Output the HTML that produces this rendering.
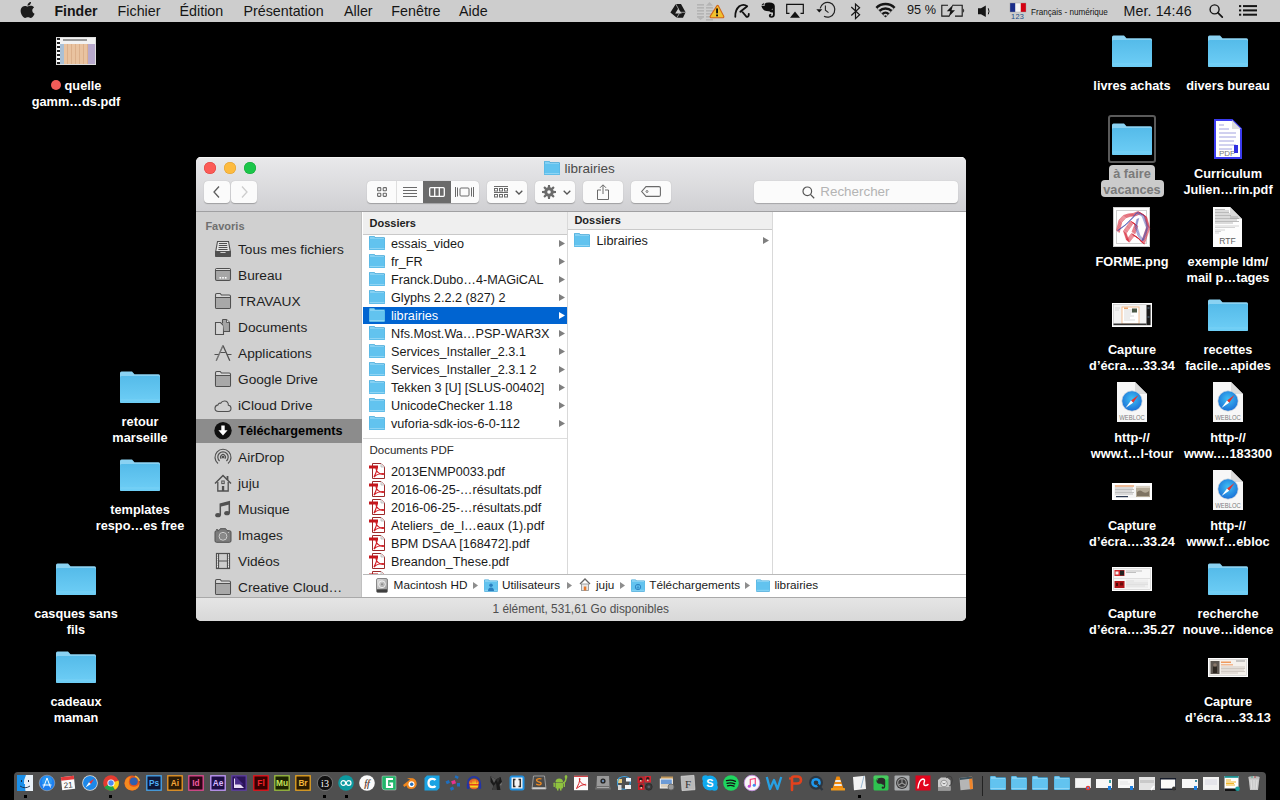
<!DOCTYPE html><html><head><meta charset="utf-8"><title>Finder</title><style>
*{box-sizing:border-box;margin:0;padding:0}
html,body{width:1280px;height:800px;overflow:hidden;background:#000}
body{position:relative;font-family:"Liberation Sans",sans-serif}
.a{position:absolute}
.t{position:absolute;white-space:nowrap;line-height:1}
svg{position:absolute;overflow:visible}
.dl{position:absolute;width:140px;text-align:center;color:#fff;font-weight:bold;font-size:12.75px;line-height:16px;text-shadow:0 1px 1.5px rgba(0,0,0,.9)}
</style></head><body>
<svg width="0" height="0" style="position:absolute;left:0;top:0">
<defs>
<linearGradient id="fg" x1="0" y1="0" x2="0" y2="1"><stop offset="0" stop-color="#55bbe9"/><stop offset="1" stop-color="#6ecef6"/></linearGradient>
<linearGradient id="tbg" x1="0" y1="0" x2="0" y2="1"><stop offset="0" stop-color="#ebe9eb"/><stop offset="1" stop-color="#d1cfd1"/></linearGradient>
<symbol id="fold" viewBox="0 0 40 32">
<path d="M1.5 0.5 H12 L14.5 3.2 H38.5 Q40 3.2 40 4.7 V30.5 Q40 32 38.5 32 H1.5 Q0 32 0 30.5 V2 Q0 0.5 1.5 0.5Z" fill="#8ad2f2"/>
<path d="M1.5 5 H38.5 Q40 5 40 6.5 V30.5 Q40 32 38.5 32 H1.5 Q0 32 0 30.5 V6.5 Q0 5 1.5 5Z" fill="url(#fg)"/>
<rect x="0.5" y="28.5" width="39" height="1" fill="#8ad8f8" opacity=".5"/>
</symbol>
<symbol id="sfold" viewBox="0 0 16 14">
<path d="M0 1 Q0 0 1 0 H5.2 L6.4 1.3 H15 Q16 1.3 16 2.3 V13 Q16 14 15 14 H1 Q0 14 0 13Z" fill="#3aa3d6"/>
<path d="M0.6 1.1 Q0.6 .6 1.1 .6 H5 L6.2 1.9 H14.9 Q15.4 1.9 15.4 2.4 V12.9 Q15.4 13.4 14.9 13.4 H1.1 Q.6 13.4 .6 12.9Z" fill="#86d1f3"/>
<rect x="0.6" y="3" width="14.8" height="10.4" fill="#62c3ef"/>
<rect x="0.6" y="12" width="14.8" height="0.8" fill="#9bdaf6"/>
</symbol>
<symbol id="pdfi" viewBox="0 0 16 16">
<path d="M3.5 0.5 H12 L15.5 4 V15.5 H3.5Z" fill="#fff" stroke="#9c2a2a" stroke-width="1"/>
<path d="M12 0.5 V4 H15.5" fill="#e8e8e8" stroke="#b9b9b9" stroke-width=".8"/>
<rect x="0" y="2.5" width="9" height="3" fill="#c4161c"/>
<path d="M5 14 C7 10 8 7 8 5.5 C8 4.5 7 4.5 7 5.5 C7 8 10 11.5 14 11.5 C15 11.5 15 10.5 14 10.5 C11 10.5 7 12 5 14Z" fill="none" stroke="#d21e25" stroke-width="1.2"/>
</symbol>
</defs></svg>
<div class="a" style="left:0;top:0;width:1280px;height:22px;background:#cdcdcd"></div>
<svg style="left:20.6px;top:1.9px" width="13.2" height="16" viewBox="2.7 0 18.6 24" preserveAspectRatio="none"><path fill="#1c1c1c" d="M12.152 6.896c-.948 0-2.415-1.078-3.960-1.040-2.040.027-3.910 1.183-4.961 3.014-2.117 3.675-.546 9.103 1.519 12.090 1.013 1.454 2.208 3.090 3.792 3.039 1.520-.065 2.090-.987 3.935-.987 1.831 0 2.350.987 3.960.948 1.637-.026 2.676-1.480 3.676-2.948 1.156-1.688 1.636-3.325 1.662-3.415-.039-.013-3.182-1.221-3.220-4.857-.026-3.040 2.480-4.494 2.597-4.559-1.429-2.090-3.623-2.324-4.390-2.376-2-.156-3.675 1.090-4.610 1.090zM15.530 3.830c.843-1.012 1.400-2.427 1.245-3.830-1.207.052-2.662.805-3.532 1.818-.780.896-1.454 2.338-1.273 3.714 1.338.104 2.715-.688 3.559-1.701"/></svg>
<div class="t" style="left:54.4px;top:3.86px;font-size:14.1px;color:#151515;font-weight:bold;">Finder</div>
<div class="t" style="left:117.6px;top:3.70px;font-size:14.3px;color:#151515;">Fichier</div>
<div class="t" style="left:179.5px;top:3.70px;font-size:14.3px;color:#151515;">Édition</div>
<div class="t" style="left:243.4px;top:3.70px;font-size:14.3px;color:#151515;">Présentation</div>
<div class="t" style="left:344px;top:3.70px;font-size:14.3px;color:#151515;">Aller</div>
<div class="t" style="left:391.3px;top:3.70px;font-size:14.3px;color:#151515;">Fenêtre</div>
<div class="t" style="left:459px;top:3.70px;font-size:14.3px;color:#151515;">Aide</div>
<svg style="left:0px;top:0px" width="1280" height="22" viewBox="0 0 1280 22"><path d="M675.8 4 H681 L685.6 12.3 L683 17.8 H676.8 L670.4 12.6Z M678.3 8.6 L675.2 13.6 H681.7Z" fill="#1a1a1a" fill-rule="evenodd"/><path d="M675.8 4 L678.6 9.2 M685.6 12.3 H679.600 M676.8 17.8 L679.400 13.400" stroke="#cfcfcf" stroke-width=".7"/><rect x="697" y="4" width="7" height="1.6" fill="#b4b4b4"/><rect x="706" y="7" width="7" height="1.6" fill="#b4b4b4"/><rect x="697" y="7" width="7" height="1.6" fill="#b4b4b4"/><rect x="706" y="10" width="7" height="1.6" fill="#b4b4b4"/><rect x="697" y="10" width="7" height="1.6" fill="#b4b4b4"/><rect x="706" y="13" width="7" height="1.6" fill="#b4b4b4"/><rect x="697" y="13" width="7" height="1.6" fill="#b4b4b4"/><rect x="706" y="16" width="7" height="1.6" fill="#b4b4b4"/><rect x="697" y="16" width="7" height="1.6" fill="#b4b4b4"/><rect x="706" y="19" width="7" height="1.6" fill="#b4b4b4"/><path d="M697 17.2 H704 L700.5 20Z" fill="#b4b4b4"/><path d="M706 5.8 H713 L709.5 2Z" fill="#b4b4b4"/><path d="M717 5.600 Q717.600 5 718.200 5.600 L723.800 16.300 Q724 17.800 722.600 17.800 H711.400 Q710 17.800 710.200 16.300Z" fill="#f0c22e" stroke="#d2661a" stroke-width="1.100"/><rect x="716.100" y="8.300" width="1.900" height="5.300" rx=".8" fill="#111"/><rect x="716.100" y="14.500" width="1.900" height="1.800" fill="#111"/><path d="M735.300 16.800 Q735 10 739.300 6.300 Q743.600 3.400 747.200 6.200 L740.300 11.800 M741.600 11 L746 16.200 Q747.600 17.600 748.600 15.800 L748.800 13.800" fill="none" stroke="#111" stroke-width="1.800" stroke-linecap="round" stroke-linejoin="round"/><path d="M764.600 3.800 Q766 2.200 769.500 2.400 Q774.500 2.600 774.800 6 V14.500 Q774.800 17.800 771.300 17.800 Q768.800 17.800 768.800 15.800 Q768.800 13.800 771 13.800 L771.500 15.200 L770.600 15.500 Q770.600 16.300 771.300 16.300 Q773 16.300 773 14.300 V12.500 Q770.500 12.800 769.300 11.300 Q766.600 11.400 764.500 10.600 Q762 9 761.400 6 L764.600 6Z M761.300 5.200 L763.700 2.800 V5.200Z" fill="#0d0d0d"/><path d="M771.400 9.500 L772.600 8.600 L772.900 9.700Z" fill="#cfcfcf"/><path d="M789.500 13.300 H786.700 V4.400 H803.300 V13.300 H800.500" fill="none" stroke="#111" stroke-width="1.200"/><path d="M795 11.500 L800 17.800 H790Z" fill="#111"/><path d="M820.200 8.300 A7.400 7.400 0 1 1 824 16.300" fill="none" stroke="#222" stroke-width="1.200"/><path d="M816.300 9.300 H822.300 L819.300 12.500Z" fill="#111"/><path d="M825.400 5.400 V10.300 L828.500 12.600" fill="none" stroke="#222" stroke-width="1.100"/><path d="M851.300 7 L859.600 14.800 L855.500 18.600 V4 L859.600 7.800 L851.300 15.500" fill="none" stroke="#151515" stroke-width="1.200" stroke-linejoin="miter"/><path d="M885.500 17.300 L875.500 6.900 A14.300 14.300 0 0 1 895.500 6.900Z" fill="#151515"/><path d="M885.500 17.300 L877.300 8.700 A11.700 11.700 0 0 1 893.700 8.700Z" fill="#cdcdcd"/><path d="M885.500 17.300 L878.600 10.100 A9.800 9.800 0 0 1 892.400 10.100Z" fill="#151515"/><path d="M885.500 17.300 L880.300 11.800 A7.400 7.400 0 0 1 890.700 11.800Z" fill="#cdcdcd"/><path d="M885.500 17.300 L881.600 13.200 A5.500 5.500 0 0 1 889.400 13.200Z" fill="#151515"/><path d="M885.500 17.300 L883.200 14.900 A3.200 3.200 0 0 1 887.800 14.900Z" fill="#cdcdcd"/><path d="M885.500 17.300 L884.200 15.900 A1.800 1.800 0 0 1 886.800 15.900Z" fill="#151515"/><path d="M948 5.200 H941.800 V16.100 H949.500 M952.500 5.200 H962.200 V16.100 H955" fill="none" stroke="#151515" stroke-width="1.100"/><path d="M963.200 8.500 Q965.200 10.600 963.200 12.700Z" fill="#151515"/><path d="M953.200 4.500 L946.800 11.200 H950.300 L948.600 17 L955 10.200 H951.500Z" fill="#151515"/><path d="M978 8.300 H981 L985.800 5.600 V17 L981 14.300 H978Z" fill="#151515"/><path d="M988.300 8.300 Q989.700 11.300 988.300 14.300" fill="none" stroke="#151515" stroke-width="1"/><rect x="1010" y="3" width="5.400" height="9" fill="#1b2e8a"/><rect x="1015.400" y="3" width="5.400" height="9" fill="#f4f4f4"/><rect x="1020.800" y="3" width="5.200" height="9" fill="#d40012"/><rect x="1010" y="3" width="16" height="9" fill="none" stroke="#9a9a9a" stroke-width=".4"/><circle cx="1214.600" cy="9.400" r="4.500" fill="none" stroke="#151515" stroke-width="1.400"/><path d="M1217.800 12.600 L1222.300 17.100" stroke="#151515" stroke-width="1.700" stroke-linecap="round"/><rect x="1239" y="5.1" width="2.200" height="2" fill="#151515"/><rect x="1243" y="5.1" width="14" height="2" fill="#151515"/><rect x="1239" y="9.4" width="2.200" height="2" fill="#151515"/><rect x="1243" y="9.4" width="14" height="2" fill="#151515"/><rect x="1239" y="13.7" width="2.200" height="2" fill="#151515"/><rect x="1243" y="13.7" width="14" height="2" fill="#151515"/></svg>
<div class="t" style="left:907px;top:4.45px;font-size:12.7px;color:#151515;">95 %</div>
<div class="t" style="left:1011px;top:12.54px;font-size:7.4px;color:#234d86;letter-spacing:.3px;">123</div>
<div class="t" style="left:1031.4px;top:6.90px;font-size:9.8px;color:#151515;transform:scaleX(.83);transform-origin:0 0;">Français - numérique</div>
<div class="t" style="left:1123.6px;top:3.58px;font-size:14.2px;color:#151515;letter-spacing:.1px;">Mer. 14:46</div>
<div class="a" style="left:56px;top:37px;width:40px;height:28px;background:#f2f2f2;border:1px solid #ddd"><div class="a" style="left:0;top:0;width:3px;height:26px;background:repeating-linear-gradient(#222 0 2px,#fff 2px 4px)"></div><div class="a" style="left:3px;top:6px;width:4px;height:20px;background:#a9c0d6"></div><div class="a" style="left:7px;top:6px;width:24px;height:20px;background:repeating-linear-gradient(90deg,#e9c3a0 0 3px,#dcb08b 3px 4px)"></div><div class="a" style="left:31px;top:6px;width:7px;height:20px;background:#b8a9cc"></div><div class="a" style="left:6px;top:1px;width:24px;height:2px;background:#999"></div></div>
<div class="a" style="left:51px;top:80px;width:10px;height:10px;border-radius:50%;background:#f25c58"></div>
<div class="dl" style="left:6px;top:78.3px"><span style="padding-left:14px">quelle</span><br>gamm…ds.pdf</div>
<svg style="left:120px;top:371px" width="40" height="32"><use href="#fold"/></svg>
<div class="dl" style="left:70px;top:413.9px;">retour<br>marseille</div>
<svg style="left:120px;top:459px" width="40" height="32"><use href="#fold"/></svg>
<div class="dl" style="left:70px;top:501.9px;">templates<br>respo…es free</div>
<svg style="left:56px;top:563px" width="40" height="32"><use href="#fold"/></svg>
<div class="dl" style="left:6px;top:606.0px;">casques sans<br>fils</div>
<svg style="left:56px;top:651px" width="40" height="32"><use href="#fold"/></svg>
<div class="dl" style="left:6px;top:694.0px;">cadeaux<br>maman</div>
<svg style="left:1112px;top:35px" width="40" height="32"><use href="#fold"/></svg>
<div class="dl" style="left:1062px;top:78.0px;">livres achats</div>
<div class="a" style="left:1108px;top:115px;width:48px;height:48px;border:2px solid #5a5a5a;border-radius:3px"></div>
<svg style="left:1112px;top:123px" width="40" height="32"><use href="#fold"/></svg>
<div class="a" style="left:1109px;top:165px;width:46px;height:16px;background:#cbcbcb;border-radius:4px 4px 0 0"></div>
<div class="a" style="left:1101px;top:180px;width:63px;height:17px;background:#cbcbcb;border-radius:4px"></div>
<div class="dl" style="left:1062px;top:166.0px;color:#7a7a7a;text-shadow:none">à faire<br>vacances</div>
<div class="a" style="left:1113px;top:207px;width:37px;height:40px;background:#fff;border:1px solid #ccc;box-shadow:inset 0 0 0 2px #fff,inset 0 0 0 3px #cfcfcf"></div>
<svg style="left:1113px;top:207px" width="37" height="40" viewBox="0 0 37 40"><path d="M3.500 23.500 L6 13 Q10 7 15 7 L20 6.500 L25 4.500 L31 8 L34 19 L28.500 35 L24.500 30.500 L18.500 26.500 L13.500 33 L10.500 24 L17.500 14 L22 17 L19 25" fill="none" stroke="#d6283a" stroke-width=".7" opacity=".75" transform="translate(0.00 0.00)"/><path d="M3.500 23.500 L6 13 Q10 7 15 7 L20 6.500 L25 4.500 L31 8 L34 19 L28.500 35 L24.500 30.500 L18.500 26.500 L13.500 33 L10.500 24 L17.500 14 L22 17 L19 25" fill="none" stroke="#d6283a" stroke-width=".7" opacity=".75" transform="translate(0.55 0.45)"/><path d="M3.500 23.500 L6 13 Q10 7 15 7 L20 6.500 L25 4.500 L31 8 L34 19 L28.500 35 L24.500 30.500 L18.500 26.500 L13.500 33 L10.500 24 L17.500 14 L22 17 L19 25" fill="none" stroke="#d6283a" stroke-width=".7" opacity=".75" transform="translate(1.10 0.90)"/><path d="M3.500 23.500 L6 13 Q10 7 15 7 L20 6.500 L25 4.500 L31 8 L34 19 L28.500 35 L24.500 30.500 L18.500 26.500 L13.500 33 L10.500 24 L17.500 14 L22 17 L19 25" fill="none" stroke="#d6283a" stroke-width=".7" opacity=".75" transform="translate(1.65 1.35)"/><path d="M3.500 23.500 L6 13 Q10 7 15 7 L20 6.500 L25 4.500 L31 8 L34 19 L28.500 35 L24.500 30.500 L18.500 26.500 L13.500 33 L10.500 24 L17.500 14 L22 17 L19 25" fill="none" stroke="#d6283a" stroke-width=".7" opacity=".75" transform="translate(2.20 1.80)"/><path d="M3.500 23.500 L6 13 Q10 7 15 7 L20 6.500 L25 4.500 L31 8 L34 19 L28.500 35 L24.500 30.500 L18.500 26.500 L13.500 33 L10.500 24 L17.500 14 L22 17 L19 25" fill="none" stroke="#d6283a" stroke-width=".7" opacity=".75" transform="translate(2.75 2.25)"/><path d="M4 24 L12 18 L19 11 L23 6 L29 9 L33.500 21 L29 34 L25 29 L22 20 L24 12" fill="none" stroke="#4a52b0" stroke-width=".6" opacity=".7" transform="translate(0.00 0.00)"/><path d="M4 24 L12 18 L19 11 L23 6 L29 9 L33.500 21 L29 34 L25 29 L22 20 L24 12" fill="none" stroke="#4a52b0" stroke-width=".6" opacity=".7" transform="translate(0.60 -0.30)"/><path d="M4 24 L12 18 L19 11 L23 6 L29 9 L33.500 21 L29 34 L25 29 L22 20 L24 12" fill="none" stroke="#4a52b0" stroke-width=".6" opacity=".7" transform="translate(1.20 -0.60)"/><path d="M4 24 L12 18 L19 11 L23 6 L29 9 L33.500 21 L29 34 L25 29 L22 20 L24 12" fill="none" stroke="#4a52b0" stroke-width=".6" opacity=".7" transform="translate(1.80 -0.90)"/></svg>
<div class="dl" style="left:1062px;top:254.0px;">FORME.png</div>
<svg style="left:1112px;top:303px" width="40" height="24" viewBox="0 0 40 24"><rect width="40" height="24" fill="#fff"/><rect x="1.5" y="1.5" width="37" height="21" fill="#f3f3f3" stroke="#bdbdbd" stroke-width=".6"/><rect x="10" y="4" width="17" height="17" fill="#fff" stroke="#f2b27a" stroke-width=".8"/><path d="M3 5 H8 M3 7 H7 M12 7 H20 M12 9 H22 M12 11 H19 M12 13 H22 M12 15 H18 M12 17 H23" stroke="#c9c9c9" stroke-width=".7"/><rect x="20" y="5.5" width="5" height="4" fill="#4b5a48"/><rect x="12" y="4.5" width="4" height="1.5" fill="#e9a36a"/><rect x="34.5" y="2" width="4" height="20" fill="#1b1b1b"/><path d="M35.5 5 H37.5 M35.5 14 H37.5" stroke="#6a8fb0" stroke-width=".8"/><rect x="1.5" y="20.5" width="33" height="1.5" fill="#333"/></svg>
<div class="dl" style="left:1062px;top:342.0px;">Capture<br>d’écra….33.34</div>
<svg style="left:1117px;top:382px" width="30" height="40" viewBox="0 0 30 40"><defs><radialGradient id="sg" cx=".5" cy=".4" r=".6"><stop offset="0" stop-color="#3fc0f5"/><stop offset="1" stop-color="#1a6fd6"/></radialGradient></defs><path d="M0 0 H18 L30 12 V40 H0Z" fill="#f7f7f7"/><path d="M18 0 V12 H30Z" fill="#dcdcdc"/><circle cx="15" cy="19" r="10.200" fill="url(#sg)" stroke="#dcdcdc" stroke-width=".7"/><path d="M21.500 13 L14 18.600 L16.200 20.700Z" fill="#e8332e"/><path d="M8.500 26 L16.200 20.700 L14 18.600Z" fill="#fff"/><text x="2.300" y="38.200" font-family="Liberation Sans" font-size="7" fill="#7d7d7d" textLength="25.500" lengthAdjust="spacingAndGlyphs">WEBLOC</text></svg>
<div class="dl" style="left:1062px;top:430.0px;">http-//<br>www.t…l-tour</div>
<svg style="left:1112px;top:483px" width="40" height="17" viewBox="0 0 40 17"><rect width="40" height="17" fill="#fff"/><rect x="2" y="2" width="36" height="13" fill="#f6f6f6"/><rect x="3" y="2.5" width="19" height="1" fill="#e8823a"/><path d="M3 5 H21 M3 6.5 H22 M3 8 H20 M3 9.5 H22 M3 11 H21" stroke="#9c9c9c" stroke-width=".6"/><rect x="4" y="13" width="12" height="1.2" fill="#2c3a52"/><rect x="24" y="3" width="14" height="11" fill="#b5ab98"/><path d="M25 9 Q28 6 31 9 Q34 11 37 8 V13 H25Z" fill="#7f7463"/><rect x="24" y="3" width="14" height="2" fill="#d8d0c2"/></svg>
<div class="dl" style="left:1062px;top:518.0px;">Capture<br>d’écra….33.24</div>
<svg style="left:1112px;top:567px" width="40" height="24" viewBox="0 0 40 24"><rect width="40" height="24" fill="#fff"/><rect x="1.5" y="1.5" width="37" height="21" fill="#f7f7f7" stroke="#c8c8c8" stroke-width=".6"/><rect x="2.5" y="3" width="10" height="6" fill="#d12a2e"/><rect x="8" y="3.5" width="4" height="5" fill="#222"/><rect x="3.5" y="4.5" width="3" height="3" fill="#f3f3f3"/><path d="M14 4 H30 M14 5.5 H24" stroke="#9a9a9a" stroke-width=".6"/><rect x="2" y="11" width="36" height=".8" fill="#d9d9d9"/><rect x="2.5" y="14" width="10" height="7" fill="#b11519"/><rect x="4" y="16" width="2" height="3" fill="#4a0a0a"/><rect x="8" y="15.5" width="3" height="3" fill="#6a0c0c"/><path d="M14 14 H22 M14 16 H36 M14 17.5 H36 M14 19 H33" stroke="#b9b9b9" stroke-width=".6"/><rect x="14" y="12.5" width="22" height="8.5" fill="#e9e9e9" opacity=".6"/></svg>
<div class="dl" style="left:1062px;top:606.0px;">Capture<br>d’écra….35.27</div>
<svg style="left:1208px;top:35px" width="40" height="32"><use href="#fold"/></svg>
<div class="dl" style="left:1158px;top:78.0px;">divers bureau</div>
<svg style="left:1214px;top:119px" width="28" height="40" viewBox="0 0 28 40"><path d="M1 1 H18 L27 10 V39 H1Z" fill="#fff" stroke="#3b3bef" stroke-width="2"/><path d="M18 1 V10 H27Z" fill="#ddd"/><g stroke="#8a8ad8" stroke-width=".8"><path d="M5 6 H10 M5 10 H15 M5 14 H22 M5 18 H22 M5 22 H20 M5 26 H22 M5 30 H18"/></g><rect x="20" y="26" width="4" height="8" fill="#3030e0"/><text x="13" y="37" font-family="Liberation Sans" font-size="8" fill="#777" text-anchor="middle">PDF</text></svg>
<div class="dl" style="left:1158px;top:166.0px;">Curriculum<br>Julien…rin.pdf</div>
<svg style="left:1213px;top:207px" width="29" height="40" viewBox="0 0 29 40"><path d="M0 0 H17 L29 12 V40 H0Z" fill="#fdfdfd"/><path d="M17 0 V12 H29Z" fill="#d9d9d9"/><g stroke="#8f8f8f" stroke-width=".6"><path d="M2 2.500 H12 M2 4 H16 M2 5.500 H16 M2 7 H17 M2 8.500 H18 M2 10 H25 M2 11.500 H26 M2 13 H24 M2 14.500 H26 M2 16 H20"/></g><g stroke="#b9b9b9" stroke-width=".6"><path d="M2 19 H26 M2 20.500 H22 M2 23 H12 M2 24.500 H8 M2 26 H6"/></g><text x="14.500" y="36.800" font-family="Liberation Sans" font-size="8.500" fill="#5e5e5e" text-anchor="middle">RTF</text></svg>
<div class="dl" style="left:1158px;top:254.0px;">exemple ldm/<br>mail p…tages</div>
<svg style="left:1208px;top:299px" width="40" height="32"><use href="#fold"/></svg>
<div class="dl" style="left:1158px;top:342.0px;">recettes<br>facile…apides</div>
<svg style="left:1213px;top:382px" width="30" height="40" viewBox="0 0 30 40"><defs><radialGradient id="sg" cx=".5" cy=".4" r=".6"><stop offset="0" stop-color="#3fc0f5"/><stop offset="1" stop-color="#1a6fd6"/></radialGradient></defs><path d="M0 0 H18 L30 12 V40 H0Z" fill="#f7f7f7"/><path d="M18 0 V12 H30Z" fill="#dcdcdc"/><circle cx="15" cy="19" r="10.200" fill="url(#sg)" stroke="#dcdcdc" stroke-width=".7"/><path d="M21.500 13 L14 18.600 L16.200 20.700Z" fill="#e8332e"/><path d="M8.500 26 L16.200 20.700 L14 18.600Z" fill="#fff"/><text x="2.300" y="38.200" font-family="Liberation Sans" font-size="7" fill="#7d7d7d" textLength="25.500" lengthAdjust="spacingAndGlyphs">WEBLOC</text></svg>
<div class="dl" style="left:1158px;top:430.0px;">http-//<br>www.…183300</div>
<svg style="left:1213px;top:470px" width="30" height="40" viewBox="0 0 30 40"><defs><radialGradient id="sg" cx=".5" cy=".4" r=".6"><stop offset="0" stop-color="#3fc0f5"/><stop offset="1" stop-color="#1a6fd6"/></radialGradient></defs><path d="M0 0 H18 L30 12 V40 H0Z" fill="#f7f7f7"/><path d="M18 0 V12 H30Z" fill="#dcdcdc"/><circle cx="15" cy="19" r="10.200" fill="url(#sg)" stroke="#dcdcdc" stroke-width=".7"/><path d="M21.500 13 L14 18.600 L16.200 20.700Z" fill="#e8332e"/><path d="M8.500 26 L16.200 20.700 L14 18.600Z" fill="#fff"/><text x="2.300" y="38.200" font-family="Liberation Sans" font-size="7" fill="#7d7d7d" textLength="25.500" lengthAdjust="spacingAndGlyphs">WEBLOC</text></svg>
<div class="dl" style="left:1158px;top:518.0px;">http-//<br>www.f…ebloc</div>
<svg style="left:1208px;top:563px" width="40" height="32"><use href="#fold"/></svg>
<div class="dl" style="left:1158px;top:606.0px;">recherche<br>nouve…idence</div>
<svg style="left:1208px;top:658px" width="40" height="19" viewBox="0 0 40 19"><rect width="40" height="19" fill="#fff"/><rect x="1.5" y="1.5" width="37" height="16" fill="#f5f1ec" stroke="#c8c8c8" stroke-width=".6"/><rect x="2.5" y="3" width="9" height="13" fill="#5d5650"/><path d="M5 15 V9 Q7 6 9 9 V15Z" fill="#2d2620"/><circle cx="7" cy="7" r="1.8" fill="#8a776a"/><rect x="13" y="3.5" width="10" height="1.5" fill="#ef9a5e"/><rect x="13" y="6" width="12" height="1.5" fill="#f2b890"/><path d="M13 9 H37 M13 10.5 H37 M13 12 H36 M13 13.5 H37 M13 15 H30" stroke="#b8b0a8" stroke-width=".6"/><rect x="28" y="2.5" width="9" height="1" fill="#9a9a9a"/></svg>
<div class="dl" style="left:1158px;top:694.0px;">Capture<br>d’écra….33.13</div>
<div class="a" style="left:196px;top:157px;width:770px;height:464px;border-radius:5px;overflow:hidden;background:#fff;box-shadow:0 0 0 .5px rgba(0,0,0,.5)">
<div class="a" style="left:0;top:0;width:770px;height:55px;background:linear-gradient(#e9e9eb,#d0d0d3);border-bottom:1px solid #a0a0a2"></div>
<div class="a" style="left:0;top:0;width:770px;height:1px;background:#f6f6f6"></div>
<div class="a" style="left:8px;top:5px;width:12px;height:12px;border-radius:50%;background:#fc5b57;box-shadow:inset 0 0 0 .5px #dc3e3a"></div>
<div class="a" style="left:28px;top:5px;width:12px;height:12px;border-radius:50%;background:#fdbb3f;box-shadow:inset 0 0 0 .5px #df9d30"></div>
<div class="a" style="left:48px;top:5px;width:12px;height:12px;border-radius:50%;background:#1bc64a;box-shadow:inset 0 0 0 .5px #13a534"></div>
<svg style="left:348px;top:4px" width="16" height="14"><use href="#sfold"/></svg>
<div class="t" style="left:368.6px;top:5.17px;font-size:13.5px;color:#4a4a4a;">librairies</div>
<div class="a" style="left:8px;top:24px;width:26px;height:22px;background:#fbfbfb;border-radius:4px;box-shadow:0 .5px 1px rgba(0,0,0,.25);"></div>
<div class="a" style="left:35px;top:24px;width:26px;height:22px;background:#fbfbfb;border-radius:4px;box-shadow:0 .5px 1px rgba(0,0,0,.25);"></div>
<svg style="left:16px;top:29px" width="10" height="12" viewBox="0 0 10 12"><path d="M7 .5 L2 6 L7 11.500" fill="none" stroke="#5e5e5e" stroke-width="1.300"/></svg>
<svg style="left:43px;top:29px" width="10" height="12" viewBox="0 0 10 12"><path d="M3 .5 L8 6 L3 11.500" fill="none" stroke="#cdcdcd" stroke-width="1.300"/></svg>
<div class="a" style="left:171px;top:24px;width:112px;height:22px;background:#fbfbfb;border-radius:4px;box-shadow:0 .5px 1px rgba(0,0,0,.25);"></div>
<div class="a" style="left:200px;top:24px;width:1px;height:22px;background:#dedede"></div>
<div class="a" style="left:227px;top:24px;width:28px;height:22px;background:#6b6b6b"></div>
<svg style="left:181px;top:30px" width="10" height="10" viewBox="0 0 10 10"><g fill="none" stroke="#6a6a6a" stroke-width="1.100"><rect x=".6" y=".6" width="3.200" height="3.200" rx=".6"/><rect x="6.200" y=".6" width="3.200" height="3.200" rx=".6"/><rect x=".6" y="6.200" width="3.200" height="3.200" rx=".6"/><rect x="6.200" y="6.200" width="3.200" height="3.200" rx=".6"/></g></svg>
<svg style="left:207px;top:30px" width="14" height="10" viewBox="0 0 14 10"><g stroke="#6a6a6a" stroke-width="1"><path d="M0 .5 H14 M0 3.500 H14 M0 6.500 H14 M0 9.500 H14"/></g></svg>
<svg style="left:233px;top:30px" width="16" height="10" viewBox="0 0 16 10"><rect x=".7" y=".7" width="14.600" height="8.600" rx="1" fill="none" stroke="#fff" stroke-width="1.300"/><path d="M5.700 .7 V9.300 M10.300 .7 V9.300" stroke="#fff" stroke-width="1.300"/></svg>
<svg style="left:259px;top:30px" width="19" height="10" viewBox="0 0 19 10"><g fill="none" stroke="#6a6a6a" stroke-width="1"><path d="M.5 0 V10 M2.500 .5 V9.500 M16.500 .5 V9.500 M18.500 0 V10"/><rect x="5" y="1" width="9" height="8" rx="1"/></g></svg>
<div class="a" style="left:291px;top:24px;width:40px;height:22px;background:#fbfbfb;border-radius:4px;box-shadow:0 .5px 1px rgba(0,0,0,.25);"></div>
<div class="a" style="left:339px;top:24px;width:40px;height:22px;background:#fbfbfb;border-radius:4px;box-shadow:0 .5px 1px rgba(0,0,0,.25);"></div>
<div class="a" style="left:387px;top:24px;width:40px;height:22px;background:#fbfbfb;border-radius:4px;box-shadow:0 .5px 1px rgba(0,0,0,.25);"></div>
<div class="a" style="left:435px;top:24px;width:40px;height:22px;background:#fbfbfb;border-radius:4px;box-shadow:0 .5px 1px rgba(0,0,0,.25);"></div>
<svg style="left:298px;top:29px" width="15" height="13" viewBox="0 0 15 13"><g fill="none" stroke="#6a6a6a" stroke-width="1"><path d="M0 .5 H14 M0 6.500 H14"/><rect x=".5" y="2.500" width="3" height="2.500"/><rect x="5.500" y="2.500" width="3" height="2.500"/><rect x="10.500" y="2.500" width="3" height="2.500"/><rect x=".5" y="8.500" width="3" height="2.500"/><rect x="5.500" y="8.500" width="3" height="2.500"/><rect x="10.500" y="8.500" width="3" height="2.500"/></g></svg>
<svg style="left:319px;top:33px" width="8" height="5" viewBox="0 0 8 5"><path d="M.7 .7 L4 4 L7.300 .7" fill="none" stroke="#555" stroke-width="1.300"/></svg>
<svg style="left:367px;top:33px" width="8" height="5" viewBox="0 0 8 5"><path d="M.7 .7 L4 4 L7.300 .7" fill="none" stroke="#555" stroke-width="1.300"/></svg>
<svg style="left:346px;top:28px" width="14" height="14" viewBox="0 0 14 14"><g fill="#6a6a6a"><circle cx="7" cy="7" r="4.700"/><path d="M6 0 H8 L8.300 3 H5.700Z M6 14 H8 L8.300 11 H5.700Z M0 6 V8 L3 8.300 V5.700Z M14 6 V8 L11 8.300 V5.700Z" /><path d="M6 0 H8 L8.300 3 H5.700Z M6 14 H8 L8.300 11 H5.700Z M0 6 V8 L3 8.300 V5.700Z M14 6 V8 L11 8.300 V5.700Z" transform="rotate(45 7 7)"/></g><circle cx="7" cy="7" r="1.800" fill="#fbfbfb"/></svg>
<svg style="left:401px;top:27px" width="12" height="16" viewBox="0 0 12 16"><g fill="none" stroke="#6a6a6a" stroke-width="1"><path d="M4 6 H.5 V15.500 H11.500 V6 H8"/><path d="M6 10 V1 M3 3.800 L6 .8 L9 3.800"/></g></svg>
<svg style="left:445px;top:29px" width="20" height="11" viewBox="0 0 20 11"><path d="M5 .6 H18 Q19.400 .6 19.400 2 V9 Q19.400 10.400 18 10.400 H5 L.7 5.500Z" fill="none" stroke="#6a6a6a" stroke-width="1.100"/><circle cx="6" cy="5.500" r="1" fill="none" stroke="#6a6a6a" stroke-width=".9"/></svg>
<div class="a" style="left:558px;top:24px;width:204px;height:22px;background:#fbfbfb;border-radius:4px;box-shadow:0 .5px 1px rgba(0,0,0,.22)"></div>
<svg style="left:606px;top:29px" width="13" height="13" viewBox="0 0 13 13"><circle cx="5.300" cy="5.300" r="4.300" fill="none" stroke="#555" stroke-width="1.200"/><path d="M8.400 8.400 L12.200 12.200" stroke="#555" stroke-width="1.300"/></svg>
<div class="t" style="left:624.3px;top:28.16px;font-size:13.4px;color:#b4b4b4;">Rechercher</div>
<div class="a" style="left:0;top:55px;width:166px;height:385px;background:#d0d0d0;border-right:1px solid #c0c0c0"></div>
<div class="t" style="left:9.400000000000006px;top:63.69px;font-size:11px;color:#6f6f6f;font-weight:bold;">Favoris</div>
<svg style="left:18px;top:83px" width="18" height="18" viewBox="0 0 18 18"><path d="M3.500 1.500 H14.500 L16.300 11.500 H1.700Z" fill="#e4e4e4" stroke="#505050" stroke-width="1.100"/><path d="M5 3.500 H13 M4.800 5.500 H13.200 M4.600 7.500 H13.400 M4.400 9.500 H13.600" stroke="#505050" stroke-width="1"/><path d="M1 11 H5.800 L6.600 13 H11.400 L12.200 11 H17 V16.200 Q17 17 16.200 17 H1.800 Q1 17 1 16.200Z" fill="#505050"/></svg>
<div class="t" style="left:42px;top:85.60px;font-size:13.7px;color:#1e1e1e;">Tous mes fichiers</div>
<svg style="left:18px;top:109px" width="18" height="18" viewBox="0 0 18 18"><rect x="1.500" y="2.500" width="15" height="12" rx="1.500" fill="#a6a6a6" stroke="#505050" stroke-width="1.100"/><path d="M2 4.500 H16" stroke="#505050" stroke-width="1"/><rect x="2" y="3" width="14" height="1" fill="#dcdcdc"/><rect x="5.500" y="11" width="1.600" height="1.600" fill="#fff"/><rect x="8.200" y="11" width="1.600" height="1.600" fill="#fff"/><rect x="10.900" y="11" width="1.600" height="1.600" fill="#fff"/></svg>
<div class="t" style="left:42px;top:111.60px;font-size:13.7px;color:#1e1e1e;">Bureau</div>
<svg style="left:18px;top:135px" width="18" height="18" viewBox="0 0 18 18"><path d="M1.500 2.800 Q1.500 1.500 2.800 1.500 H6.200 L7.500 3 H15.200 Q16.500 3 16.500 4.300 V15.200 Q16.500 16.500 15.200 16.500 H2.800 Q1.500 16.500 1.500 15.200Z" fill="#d6d6d6" stroke="#505050" stroke-width="1.100"/><rect x="2" y="5.500" width="14" height="10.500" fill="#a8a8a8"/><path d="M2 5.500 H16" stroke="#505050" stroke-width="1"/></svg>
<div class="t" style="left:42px;top:137.60px;font-size:13.7px;color:#1e1e1e;">TRAVAUX</div>
<svg style="left:18px;top:161px" width="18" height="18" viewBox="0 0 18 18"><path d="M1.500 4.500 H6.500 L9.500 7.500 V16.500 H1.500Z" fill="#d4d4d4" stroke="#505050" stroke-width="1.100"/><path d="M8.500 1.500 H12.500 L15.500 4.500 V13.500 H10" fill="#a4a4a4" stroke="#505050" stroke-width="1.100"/><path d="M8.500 1.500 V5.500" stroke="#505050" stroke-width="1.100"/><path d="M12.500 1.500 V4.500 H15.500" fill="#e8e8e8" stroke="#505050" stroke-width=".9"/></svg>
<div class="t" style="left:42px;top:163.60px;font-size:13.7px;color:#1e1e1e;">Documents</div>
<svg style="left:18px;top:187px" width="18" height="18" viewBox="0 0 18 18"><path d="M9 1.500 L2.200 16.800 M9 1.500 L15.800 16.800" fill="none" stroke="#505050" stroke-width="1.300"/><path d="M.5 10.500 H5 M13 10.500 H17.500 M6.300 8.500 H11.700" stroke="#505050" stroke-width="1.200"/><path d="M9 1.500 L2.200 16.800" stroke="#bbb" stroke-width=".4"/></svg>
<div class="t" style="left:42px;top:189.60px;font-size:13.7px;color:#1e1e1e;">Applications</div>
<svg style="left:18px;top:213px" width="18" height="18" viewBox="0 0 18 18"><path d="M1.500 2.800 Q1.500 1.500 2.800 1.500 H6.200 L7.500 3 H15.200 Q16.500 3 16.500 4.300 V15.200 Q16.500 16.500 15.200 16.500 H2.800 Q1.500 16.500 1.500 15.200Z" fill="#d6d6d6" stroke="#505050" stroke-width="1.100"/><rect x="2" y="5.500" width="14" height="10.500" fill="#a8a8a8"/><path d="M2 5.500 H16" stroke="#505050" stroke-width="1"/></svg>
<div class="t" style="left:42px;top:215.60px;font-size:13.7px;color:#1e1e1e;">Google Drive</div>
<svg style="left:18px;top:239px" width="18" height="18" viewBox="0 0 18 18"><path d="M4.500 15.500 H14 Q17 15.500 17 12.300 Q17 9.600 14.400 9.300 Q14.300 5 10.400 5 Q7.800 5 6.700 7.300 Q4.800 6.700 4 8.900 Q1 9.400 1 12.300 Q1 15.500 4.500 15.500Z" fill="#cfcfcf" stroke="#505050" stroke-width="1.100"/></svg>
<div class="t" style="left:42px;top:241.60px;font-size:13.7px;color:#1e1e1e;">iCloud Drive</div>
<div class="a" style="left:0;top:262px;width:166px;height:24px;background:#8c8c8c"></div>
<svg style="left:18px;top:265px" width="18" height="18" viewBox="0 0 18 18"><circle cx="9" cy="8.600" r="8.700" fill="#101010"/><path d="M7.300 3.500 H10.700 V8.300 H13.600 L9 13.500 L4.400 8.300 H7.300Z" fill="#fff"/></svg>
<div class="t" style="left:42.19999999999999px;top:268.45px;font-size:12.7px;color:#000;font-weight:bold;">Téléchargements</div>
<svg style="left:18px;top:291px" width="18" height="18" viewBox="0 0 18 18"><g fill="none" stroke="#505050" stroke-width="1.200"><path d="M4 15.500 A8 8 0 1 1 14 15.500"/><path d="M5.600 13 A5.200 5.200 0 1 1 12.400 13"/><path d="M7.300 10.700 A2.400 2.400 0 1 1 10.700 10.700"/></g><circle cx="9" cy="9.100" r="1.300" fill="#505050"/></svg>
<div class="t" style="left:42px;top:293.60px;font-size:13.7px;color:#1e1e1e;">AirDrop</div>
<svg style="left:18px;top:317px" width="18" height="18" viewBox="0 0 18 18"><path d="M1 9.500 L9 1.500 L17 9.500" fill="none" stroke="#505050" stroke-width="1.500"/><path d="M3.800 8 V17 H14.200 V8" fill="#d0d0d0" stroke="#505050" stroke-width="1.300"/><rect x="12.600" y="2" width="1.800" height="4" fill="#505050"/><rect x="7.900" y="12" width="2.300" height="5" fill="#505050"/><rect x="7.800" y="7" width="2.400" height="2.600" fill="none" stroke="#505050" stroke-width="1"/></svg>
<div class="t" style="left:42px;top:319.60px;font-size:13.7px;color:#1e1e1e;">juju</div>
<svg style="left:18px;top:343px" width="18" height="18" viewBox="0 0 18 18"><path d="M6.300 15 V4 L15.300 1.800 V13" fill="none" stroke="#505050" stroke-width="1.500"/><path d="M6.300 4 L15.300 1.800 V4.500 L6.300 6.700Z" fill="#505050"/><ellipse cx="4" cy="15.200" rx="2.800" ry="2.100" fill="#505050"/><ellipse cx="13" cy="13.200" rx="2.800" ry="2.100" fill="#505050"/></svg>
<div class="t" style="left:42px;top:345.60px;font-size:13.7px;color:#1e1e1e;">Musique</div>
<svg style="left:18px;top:369px" width="18" height="18" viewBox="0 0 18 18"><path d="M1 6.200 Q1 4.700 2.500 4.700 H5 L6.300 2.700 H11.700 L13 4.700 H15.500 Q17 4.700 17 6.200 V14.800 Q17 16.300 15.500 16.300 H2.500 Q1 16.300 1 14.800Z" fill="#7c7c7c" stroke="#505050" stroke-width="1"/><circle cx="9" cy="10.300" r="3.900" fill="none" stroke="#d0d0d0" stroke-width="1"/><circle cx="9" cy="10.300" r="2.900" fill="#8a8a8a"/><rect x="2" y="3.200" width="2.200" height="1" fill="#505050"/><circle cx="14.500" cy="6.500" r=".6" fill="#ccc"/></svg>
<div class="t" style="left:42px;top:371.60px;font-size:13.7px;color:#1e1e1e;">Images</div>
<svg style="left:18px;top:395px" width="18" height="18" viewBox="0 0 18 18"><rect x="2.500" y="1.500" width="13" height="15" fill="#cdcdcd" stroke="#505050" stroke-width="1.200"/><path d="M4.500 1.500 V16.500 M13.500 1.500 V16.500 M4.500 9 H13.500" stroke="#505050" stroke-width="1.200"/><g fill="#f2f2f2"><rect x="3" y="2.500" width="1" height="1"/><rect x="3" y="4.800" width="1" height="1"/><rect x="3" y="7.100" width="1" height="1"/><rect x="3" y="9.400" width="1" height="1"/><rect x="3" y="11.700" width="1" height="1"/><rect x="3" y="14" width="1" height="1"/><rect x="14" y="2.500" width="1" height="1"/><rect x="14" y="4.800" width="1" height="1"/><rect x="14" y="7.100" width="1" height="1"/><rect x="14" y="9.400" width="1" height="1"/><rect x="14" y="11.700" width="1" height="1"/><rect x="14" y="14" width="1" height="1"/></g></svg>
<div class="t" style="left:42px;top:397.60px;font-size:13.7px;color:#1e1e1e;">Vidéos</div>
<svg style="left:18px;top:421px" width="18" height="18" viewBox="0 0 18 18"><path d="M1.500 2.800 Q1.500 1.500 2.800 1.500 H6.200 L7.500 3 H15.200 Q16.500 3 16.500 4.300 V15.200 Q16.500 16.500 15.200 16.500 H2.800 Q1.500 16.500 1.500 15.200Z" fill="#d6d6d6" stroke="#505050" stroke-width="1.100"/><rect x="2" y="5.500" width="14" height="10.500" fill="#a8a8a8"/><path d="M2 5.500 H16" stroke="#505050" stroke-width="1"/></svg>
<div class="t" style="left:42px;top:423.60px;font-size:13.7px;color:#1e1e1e;">Creative Cloud…</div>
<div class="a" style="left:167px;top:55px;width:204px;height:23px;background:#efefef;border-bottom:1px solid #c9c9c9"></div>
<div class="a" style="left:372px;top:55px;width:204px;height:18px;background:#efefef;border-bottom:1px solid #c9c9c9"></div>
<div class="a" style="left:577px;top:55px;width:193px;height:0px;"></div>
<div class="a" style="left:371px;top:55px;width:1px;height:362px;background:#d9d9d9"></div>
<div class="a" style="left:576px;top:55px;width:1px;height:362px;background:#d9d9d9"></div>
<div class="t" style="left:173.5px;top:60.99px;font-size:11px;color:#1e1e1e;font-weight:bold;">Dossiers</div>
<div class="t" style="left:378.4px;top:58.29px;font-size:11px;color:#1e1e1e;font-weight:bold;">Dossiers</div>
<svg style="left:173px;top:79px" width="16" height="14"><use href="#sfold"/></svg>
<div class="t" style="left:195px;top:80.69px;font-size:12.65px;color:#1a1a1a;">essais_video</div>
<svg style="left:363px;top:82.5px" width="6" height="7" viewBox="0 0 6 7"><path d="M0 0 L6 3.500 L0 7Z" fill="#7f7f7f"/></svg>
<svg style="left:173px;top:97px" width="16" height="14"><use href="#sfold"/></svg>
<div class="t" style="left:195px;top:98.69px;font-size:12.65px;color:#1a1a1a;">fr_FR</div>
<svg style="left:363px;top:100.5px" width="6" height="7" viewBox="0 0 6 7"><path d="M0 0 L6 3.500 L0 7Z" fill="#7f7f7f"/></svg>
<svg style="left:173px;top:115px" width="16" height="14"><use href="#sfold"/></svg>
<div class="t" style="left:195px;top:116.69px;font-size:12.65px;color:#1a1a1a;">Franck.Dubo…4-MAGiCAL</div>
<svg style="left:363px;top:118.5px" width="6" height="7" viewBox="0 0 6 7"><path d="M0 0 L6 3.500 L0 7Z" fill="#7f7f7f"/></svg>
<svg style="left:173px;top:133px" width="16" height="14"><use href="#sfold"/></svg>
<div class="t" style="left:195px;top:134.69px;font-size:12.65px;color:#1a1a1a;">Glyphs 2.2.2 (827) 2</div>
<svg style="left:363px;top:136.5px" width="6" height="7" viewBox="0 0 6 7"><path d="M0 0 L6 3.500 L0 7Z" fill="#7f7f7f"/></svg>
<div class="a" style="left:167px;top:150px;width:204px;height:17px;background:#0064d1"></div>
<svg style="left:173px;top:151px" width="16" height="14"><use href="#sfold"/></svg>
<div class="t" style="left:195px;top:152.69px;font-size:12.65px;color:#fff;">librairies</div>
<svg style="left:363px;top:154.5px" width="6" height="7" viewBox="0 0 6 7"><path d="M0 0 L6 3.500 L0 7Z" fill="#fff"/></svg>
<svg style="left:173px;top:169px" width="16" height="14"><use href="#sfold"/></svg>
<div class="t" style="left:195px;top:170.69px;font-size:12.65px;color:#1a1a1a;">Nfs.Most.Wa…PSP-WAR3X</div>
<svg style="left:363px;top:172.5px" width="6" height="7" viewBox="0 0 6 7"><path d="M0 0 L6 3.500 L0 7Z" fill="#7f7f7f"/></svg>
<svg style="left:173px;top:187px" width="16" height="14"><use href="#sfold"/></svg>
<div class="t" style="left:195px;top:188.69px;font-size:12.65px;color:#1a1a1a;">Services_Installer_2.3.1</div>
<svg style="left:363px;top:190.5px" width="6" height="7" viewBox="0 0 6 7"><path d="M0 0 L6 3.500 L0 7Z" fill="#7f7f7f"/></svg>
<svg style="left:173px;top:205px" width="16" height="14"><use href="#sfold"/></svg>
<div class="t" style="left:195px;top:206.69px;font-size:12.65px;color:#1a1a1a;">Services_Installer_2.3.1 2</div>
<svg style="left:363px;top:208.5px" width="6" height="7" viewBox="0 0 6 7"><path d="M0 0 L6 3.500 L0 7Z" fill="#7f7f7f"/></svg>
<svg style="left:173px;top:223px" width="16" height="14"><use href="#sfold"/></svg>
<div class="t" style="left:195px;top:224.69px;font-size:12.65px;color:#1a1a1a;">Tekken 3 [U] [SLUS-00402]</div>
<svg style="left:363px;top:226.5px" width="6" height="7" viewBox="0 0 6 7"><path d="M0 0 L6 3.500 L0 7Z" fill="#7f7f7f"/></svg>
<svg style="left:173px;top:241px" width="16" height="14"><use href="#sfold"/></svg>
<div class="t" style="left:195px;top:242.69px;font-size:12.65px;color:#1a1a1a;">UnicodeChecker 1.18</div>
<svg style="left:363px;top:244.5px" width="6" height="7" viewBox="0 0 6 7"><path d="M0 0 L6 3.500 L0 7Z" fill="#7f7f7f"/></svg>
<svg style="left:173px;top:259px" width="16" height="14"><use href="#sfold"/></svg>
<div class="t" style="left:195px;top:260.69px;font-size:12.65px;color:#1a1a1a;">vuforia-sdk-ios-6-0-112</div>
<svg style="left:363px;top:262.5px" width="6" height="7" viewBox="0 0 6 7"><path d="M0 0 L6 3.500 L0 7Z" fill="#7f7f7f"/></svg>
<div class="a" style="left:167px;top:281px;width:204px;height:1px;background:#dcdcdc"></div>
<div class="t" style="left:173.5px;top:287.57px;font-size:11.5px;color:#2a2a2a;">Documents PDF</div>
<svg style="left:173px;top:306px" width="16" height="16"><use href="#pdfi"/></svg>
<div class="t" style="left:195px;top:308.69px;font-size:12.65px;color:#1a1a1a;">2013ENMP0033.pdf</div>
<svg style="left:173px;top:324px" width="16" height="16"><use href="#pdfi"/></svg>
<div class="t" style="left:195px;top:326.69px;font-size:12.65px;color:#1a1a1a;">2016-06-25-…résultats.pdf</div>
<svg style="left:173px;top:342px" width="16" height="16"><use href="#pdfi"/></svg>
<div class="t" style="left:195px;top:344.69px;font-size:12.65px;color:#1a1a1a;">2016-06-25-…résultats.pdf</div>
<svg style="left:173px;top:360px" width="16" height="16"><use href="#pdfi"/></svg>
<div class="t" style="left:195px;top:362.69px;font-size:12.65px;color:#1a1a1a;">Ateliers_de_l…eaux (1).pdf</div>
<svg style="left:173px;top:378px" width="16" height="16"><use href="#pdfi"/></svg>
<div class="t" style="left:195px;top:380.69px;font-size:12.65px;color:#1a1a1a;">BPM DSAA [168472].pdf</div>
<svg style="left:173px;top:396px" width="16" height="16"><use href="#pdfi"/></svg>
<div class="t" style="left:195px;top:398.69px;font-size:12.65px;color:#1a1a1a;">Breandon_These.pdf</div>
<svg style="left:173px;top:414px" width="16" height="16"><use href="#pdfi"/></svg>
<svg style="left:378px;top:76px" width="16" height="14"><use href="#sfold"/></svg>
<div class="t" style="left:400.6px;top:77.89px;font-size:12.65px;color:#1a1a1a;">Librairies</div>
<svg style="left:567px;top:79.5px" width="6" height="7" viewBox="0 0 6 7"><path d="M0 0 L6 3.500 L0 7Z" fill="#7f7f7f"/></svg>
<div class="a" style="left:167px;top:417px;width:603px;height:23px;background:#fff;border-top:1px solid #b9b9b9"></div>
<div class="a" style="left:0;top:440px;width:770px;height:24px;background:linear-gradient(#e5e5e5,#d8d8d8);border-top:1px solid #a9a9a9"></div>
<svg style="left:180px;top:421px" width="12" height="15" viewBox="0 0 12 15"><defs><linearGradient id="hdg" x1="0" y1="0" x2="1" y2="1"><stop offset="0" stop-color="#e2e2e2"/><stop offset="1" stop-color="#8d8d8d"/></linearGradient></defs><rect x=".5" y=".5" width="11" height="14" rx="1.500" fill="url(#hdg)" stroke="#707070" stroke-width=".8"/><circle cx="6" cy="6.300" r="3.400" fill="none" stroke="#f4f4f4" stroke-width=".9"/><circle cx="6" cy="6.300" r="1" fill="#888"/><rect x="1" y="11.300" width="10" height="2.700" fill="#3e3e3e"/></svg>
<div class="t" style="left:197.60000000000002px;top:422.05px;font-size:11.75px;color:#1a1a1a;">Macintosh HD</div>
<svg style="left:277px;top:425px" width="5" height="7" viewBox="0 0 5 7"><path d="M0 0 L5 3.500 L0 7Z" fill="#8d8d8d"/></svg>
<svg style="left:371px;top:425px" width="5" height="7" viewBox="0 0 5 7"><path d="M0 0 L5 3.500 L0 7Z" fill="#8d8d8d"/></svg>
<svg style="left:424px;top:425px" width="5" height="7" viewBox="0 0 5 7"><path d="M0 0 L5 3.500 L0 7Z" fill="#8d8d8d"/></svg>
<svg style="left:549px;top:425px" width="5" height="7" viewBox="0 0 5 7"><path d="M0 0 L5 3.500 L0 7Z" fill="#8d8d8d"/></svg>
<svg style="left:288px;top:422px" width="14" height="13"><use href="#sfold"/></svg>
<svg style="left:292px;top:426px" width="6" height="8" viewBox="0 0 6 8"><circle cx="3" cy="2.200" r="1.800" fill="#2a7fbf"/><path d="M0 8 Q0 4.500 3 4.500 Q6 4.500 6 8Z" fill="#2a7fbf"/></svg>
<div class="t" style="left:306px;top:422.05px;font-size:11.75px;color:#1a1a1a;">Utilisateurs</div>
<svg style="left:383px;top:421px" width="12" height="13" viewBox="0 0 12 13"><path d="M1 6 L6 1 L11 6" fill="none" stroke="#666" stroke-width="1.300"/><rect x="2.500" y="6" width="7" height="6.500" fill="#e7e7e7" stroke="#8a8a8a" stroke-width=".8"/><rect x="4.800" y="8.500" width="2.500" height="4" fill="#e8792a"/></svg>
<div class="t" style="left:400px;top:422.05px;font-size:11.75px;color:#1a1a1a;">juju</div>
<svg style="left:435px;top:422px" width="14" height="13"><use href="#sfold"/></svg>
<svg style="left:439px;top:427px" width="6" height="6" viewBox="0 0 6 6"><circle cx="3" cy="3" r="2.700" fill="none" stroke="#2a7fbf" stroke-width=".9"/><path d="M3 1.300 V4.300 M1.800 3.200 L3 4.400 L4.200 3.200" fill="none" stroke="#2a7fbf" stroke-width=".8"/></svg>
<div class="t" style="left:453.29999999999995px;top:422.05px;font-size:11.75px;color:#1a1a1a;">Téléchargements</div>
<svg style="left:560px;top:422px" width="14" height="13"><use href="#sfold"/></svg>
<div class="t" style="left:578.4px;top:422.05px;font-size:11.75px;color:#1a1a1a;">librairies</div>
<div class="t" style="left:296.5px;top:446.77px;font-size:11.85px;color:#4e4e4e;">1 élément, 531,61 Go disponibles</div>
</div>
<div class="a" style="left:14px;top:772px;width:1252px;height:28px;background:#4f4f4f;border-radius:4px 4px 0 0"></div>
<svg style="left:17.40px;top:775px" width="16" height="16" viewBox="0 0 16 16"><rect x="0" y="0" width="16" height="16" fill="#e9f1f8"/><path d="M0 0 H9 Q6.500 5 7 9 H8 Q7.600 12 8.500 16 H0Z" fill="#1a8fe9"/><path d="M3 11 Q8 14.500 13 11" fill="none" stroke="#1b2d44" stroke-width=".9"/><rect x="4" y="5" width="1" height="2" fill="#1b2d44"/><rect x="11" y="5" width="1" height="2" fill="#1b2d44"/></svg>
<div class="a" style="left:24px;top:795px;width:3px;height:3px;background:#000"></div>
<svg style="left:38.78px;top:775px" width="16" height="16" viewBox="0 0 16 16"><circle cx="8" cy="8" r="7.800" fill="#1d7ff0" stroke="#d9c9b8" stroke-width=".4"/><circle cx="8" cy="6" r="5" fill="#2fa5f7" opacity=".6"/><path d="M8 3 L4.500 12.500 M8 3 L11.500 12.500 M3.500 10 H12.500" stroke="#fff" stroke-width="1"/></svg>
<svg style="left:60.16px;top:775px" width="16" height="16" viewBox="0 0 16 16"><g transform="rotate(-6 8 8)"><rect x="1.500" y="1.500" width="13" height="13" fill="#fafafa"/><rect x="1.500" y="1.500" width="13" height="3.500" fill="#e63a3a"/><text x="8" y="12.800" font-family="Liberation Sans" font-size="8" fill="#333" text-anchor="middle">21</text></g></svg>
<svg style="left:81.54px;top:775px" width="16" height="16" viewBox="0 0 16 16"><circle cx="8" cy="8" r="7.800" fill="#dedede"/><circle cx="8" cy="8" r="7" fill="#1d88e8"/><path d="M12.500 3.500 L7 7.200 L8.800 9Z" fill="#e33"/><path d="M3.500 12.500 L8.800 9 L7 7.200Z" fill="#fff"/></svg>
<svg style="left:102.92px;top:775px" width="16" height="16" viewBox="0 0 16 16"><circle cx="8" cy="8" r="7.800" fill="#e53b30"/><path d="M8 8 L1.300 12 A7.800 7.800 0 0 0 12 14.700Z" fill="#1fa546"/><path d="M8 8 L12 14.700 A7.800 7.800 0 0 0 15.600 5.500Z" fill="#fcce1b"/><circle cx="8" cy="8" r="3.600" fill="#fff"/><circle cx="8" cy="8" r="2.700" fill="#4b8bf5"/></svg>
<div class="a" style="left:109px;top:795px;width:3px;height:3px;background:#000"></div>
<svg style="left:124.30px;top:775px" width="16" height="16" viewBox="0 0 16 16"><circle cx="8" cy="8" r="7.600" fill="#e5541b"/><circle cx="9.800" cy="6.300" r="3.900" fill="#2f5fae"/><path d="M.6 8.500 Q1.500 15.400 8.500 15.500 Q15.400 15 15.500 8 Q13.500 12.200 9.200 11.800 Q5 11.200 4.800 7.200 Q4.500 4 7 1.500 Q5 1.300 3 3 Q.5 5 .6 8.500Z" fill="#f58a1f"/><path d="M11 1.200 Q14.500 2.500 15.400 6" fill="none" stroke="#f3b33a" stroke-width="1.300"/></svg>
<svg style="left:145.68px;top:775px" width="16" height="16" viewBox="0 0 16 16"><rect x=".8" y=".8" width="14.4" height="14.4" fill="#0d1736" stroke="#48a7ef" stroke-width="1.300"/><text x="8" y="11.300" font-family="Liberation Sans" font-weight="bold" font-size="8.300" fill="#4fb0f8" text-anchor="middle">Ps</text></svg>
<svg style="left:167.06px;top:775px" width="16" height="16" viewBox="0 0 16 16"><rect x=".8" y=".8" width="14.4" height="14.4" fill="#2c1b05" stroke="#f09a25" stroke-width="1.300"/><text x="8" y="11.300" font-family="Liberation Sans" font-weight="bold" font-size="8.300" fill="#f7a83a" text-anchor="middle">Ai</text></svg>
<svg style="left:188.44px;top:775px" width="16" height="16" viewBox="0 0 16 16"><rect x=".8" y=".8" width="14.4" height="14.4" fill="#2b0516" stroke="#e24b90" stroke-width="1.300"/><text x="8" y="11.300" font-family="Liberation Sans" font-weight="bold" font-size="8.300" fill="#ef5aa0" text-anchor="middle">Id</text></svg>
<svg style="left:209.82px;top:775px" width="16" height="16" viewBox="0 0 16 16"><rect x=".8" y=".8" width="14.4" height="14.4" fill="#1d0d45" stroke="#c59cff" stroke-width="1.300"/><text x="8" y="11.300" font-family="Liberation Sans" font-weight="bold" font-size="8.300" fill="#d8b8ff" text-anchor="middle">Ae</text></svg>
<svg style="left:231.20px;top:775px" width="16" height="16" viewBox="0 0 16 16"><rect x=".8" y=".8" width="14.400" height="14.400" fill="#2a1358" stroke="#5d3fa0" stroke-width="1.300"/><path d="M3 3 L13 13 H3Z" fill="#e8dcf5"/><path d="M3 3 L13 13 H3Z" fill="#4a2c8a" transform="translate(1.500 -1.500) scale(.85)"/></svg>
<svg style="left:252.58px;top:775px" width="16" height="16" viewBox="0 0 16 16"><rect x=".8" y=".8" width="14.4" height="14.4" fill="#3a0000" stroke="#e8121b" stroke-width="1.300"/><text x="8" y="11.300" font-family="Liberation Sans" font-weight="bold" font-size="8.300" fill="#f4242c" text-anchor="middle">Fl</text></svg>
<svg style="left:273.96px;top:775px" width="16" height="16" viewBox="0 0 16 16"><rect x=".8" y=".8" width="14.4" height="14.4" fill="#1c2400" stroke="#9cbf3e" stroke-width="1.300"/><text x="8" y="11.300" font-family="Liberation Sans" font-weight="bold" font-size="8.300" fill="#c7e55c" text-anchor="middle">Mu</text></svg>
<svg style="left:295.34px;top:775px" width="16" height="16" viewBox="0 0 16 16"><rect x=".8" y=".8" width="14.4" height="14.4" fill="#2c1b00" stroke="#e9a521" stroke-width="1.300"/><text x="8" y="11.300" font-family="Liberation Sans" font-weight="bold" font-size="8.300" fill="#f4b63c" text-anchor="middle">Br</text></svg>
<svg style="left:316.72px;top:775px" width="16" height="16" viewBox="0 0 16 16"><circle cx="8" cy="8" r="7.600" fill="#111" stroke="#9a9a9a" stroke-width=".6"/><text x="8" y="12" font-family="Liberation Serif" font-size="10" fill="#fff" text-anchor="middle">i3</text></svg>
<div class="a" style="left:323px;top:795px;width:3px;height:3px;background:#000"></div>
<svg style="left:338.10px;top:775px" width="16" height="16" viewBox="0 0 16 16"><circle cx="8" cy="8" r="7.800" fill="#0d9aa0"/><g fill="none" stroke="#fff" stroke-width="1.200"><circle cx="5.300" cy="8" r="2.300"/><circle cx="10.700" cy="8" r="2.300"/></g></svg>
<div class="a" style="left:345px;top:795px;width:3px;height:3px;background:#000"></div>
<svg style="left:359.48px;top:775px" width="16" height="16" viewBox="0 0 16 16"><circle cx="8" cy="8" r="7.800" fill="#fafafa"/><text x="8" y="12" font-family="Liberation Serif" font-style="italic" font-size="10" fill="#222" text-anchor="middle">ff</text><path d="M6 13 L11 5" stroke="#e06030" stroke-width=".7"/></svg>
<svg style="left:380.86px;top:775px" width="16" height="16" viewBox="0 0 16 16"><path d="M2 1 H14 Q15 1 15 2 V14 Q15 15 14 15 H4 Q1 15 1 12 V2 Q1 1 2 1Z" fill="#22b56a" stroke="#d0d0d0" stroke-width=".5"/><path d="M12 4 H6 V12 H11 V8.500 H8.500" fill="none" stroke="#fff" stroke-width="2.200"/></svg>
<svg style="left:402.24px;top:775px" width="16" height="16" viewBox="0 0 16 16"><path d="M1 10 L8 4.500 L5 3 L11 3.300 Q15 5 14.700 9.500 Q13.500 14 9 14 Q5 14 4.500 10.500 L2.300 12Z" fill="#f0871e"/><circle cx="9.500" cy="9.300" r="3" fill="#fff"/><circle cx="9.700" cy="9.300" r="1.700" fill="#2a6fb5"/></svg>
<svg style="left:423.62px;top:775px" width="16" height="16" viewBox="0 0 16 16"><path d="M3 .5 H15.500 V13 L13 15.500 H.5 V3Z" fill="#1ba3e3"/><path d="M11.500 5 Q10.500 3.800 8.500 3.800 Q4.500 3.800 4.500 8 Q4.500 12.200 8.500 12.200 Q10.500 12.200 11.500 11" fill="none" stroke="#fff" stroke-width="2.300"/></svg>
<svg style="left:445.00px;top:775px" width="16" height="16" viewBox="0 0 16 16"><rect x="1" y="5.500" width="3.500" height="3" fill="#1e6fc0" transform="rotate(-25 3 7)"/><rect x="10" y="1" width="3.500" height="2.500" fill="#1e6fc0" transform="rotate(25 12 2)"/><rect x="6.500" y="5.500" width="4" height="3.500" fill="#e9318f" transform="rotate(-20 8.500 7)"/><rect x="12" y="8" width="3" height="3.500" fill="#1e6fc0"/><rect x="5" y="12" width="3.500" height="3" fill="#1e6fc0" transform="rotate(-25 7 13)"/></svg>
<svg style="left:466.38px;top:775px" width="16" height="16" viewBox="0 0 16 16"><circle cx="8" cy="9" r="5.300" fill="#e7622a"/><path d="M3.500 10 L5 7 L6 9.500 L7 5 L8 9 L9 4.500 L10.200 9 L11.200 6.500 L12.500 10 L11.500 12.500 H4.500Z" fill="#f7d21f"/><path d="M3 9.800 H13" stroke="#e1261c" stroke-width="1.300"/><path d="M1.800 11 V8 A6.200 6.200 0 0 1 14.200 8 V11" fill="none" stroke="#2233a8" stroke-width="1.500"/><rect x=".8" y="8.500" width="2.600" height="5.500" rx="1.200" fill="#2233a8"/><rect x="12.600" y="8.500" width="2.600" height="5.500" rx="1.200" fill="#2233a8"/></svg>
<svg style="left:487.76px;top:775px" width="16" height="16" viewBox="0 0 16 16"><path d="M2.500 1 L8 4.500 L12.500 2 L14 7 L11.500 10 L12.500 15 H4 L5.500 11 L2.500 7Z" fill="#1a1a1a"/><path d="M2.500 1 L8 4.500 L6 8Z" fill="#5a5a5a"/><path d="M8 4.500 L12.500 2 L10 8Z" fill="#2e2e2e"/><path d="M5.500 11 L8 8 L9 15H4Z" fill="#3d3d3d"/><path d="M11.500 10 L14 7 L13.300 10.500Z" fill="#777"/></svg>
<svg style="left:509.14px;top:775px" width="16" height="16" viewBox="0 0 16 16"><rect x=".5" y=".5" width="15" height="15" rx="2.500" fill="#1f8fe0"/><rect x="2.500" y="2.500" width="11" height="11" fill="#f4f4f4"/><path d="M6.500 4.500 H4.700 V11.500 H6.500 M9.500 4.500 H11.300 V11.500 H9.500" fill="none" stroke="#2c2c2c" stroke-width="1.500"/></svg>
<svg style="left:530.52px;top:775px" width="16" height="16" viewBox="0 0 16 16"><path d="M2.500 1 H13.500 L15 14 H1Z" fill="#4a4a4a" stroke="#bdbdbd" stroke-width=".7"/><rect x="1.400" y="12.300" width="13.200" height="1.600" fill="#d9d9d9"/><path d="M10.500 4 Q8 3 6 4.300 Q4.700 5.600 7 6.600 L9.200 7.400 Q11.200 8.400 9.200 9.600 Q7.500 10.300 5.200 9.200" fill="none" stroke="#f28b1f" stroke-width="1.300"/></svg>
<svg style="left:551.90px;top:775px" width="16" height="16" viewBox="0 0 16 16"><path d="M3.500 7 Q3.500 3.500 7.300 3.500 Q11 3.500 11 7Z" fill="#8fc23f"/><rect x="3.500" y="7.600" width="7.500" height="6" rx=".8" fill="#8fc23f"/><rect x="1.500" y="7.600" width="1.400" height="4.500" rx=".7" fill="#8fc23f"/><rect x="11.600" y="7.600" width="1.400" height="4.500" rx=".7" fill="#8fc23f"/><rect x="5" y="12.500" width="1.500" height="3" fill="#8fc23f"/><rect x="8" y="12.500" width="1.500" height="3" fill="#8fc23f"/><path d="M11 8 Q14 7 14 3 V.8" fill="none" stroke="#8fc23f" stroke-width="1.400"/><rect x="12.800" y=".3" width="2.400" height="3.500" rx="1" fill="#8fc23f"/></svg>
<svg style="left:573.28px;top:775px" width="16" height="16" viewBox="0 0 16 16"><rect x="1" y=".8" width="14" height="14.400" fill="#fbfbfb"/><rect x="1" y=".8" width="14" height="1" fill="#c4161c"/><path d="M3.500 13.500 Q6.500 8 7 4 Q7 2.800 6.300 3.500 Q6 8 12.500 10.200 Q13.800 10 12.500 9.300 Q8 9.500 3.500 13.500Z" fill="none" stroke="#d6282e" stroke-width="1"/></svg>
<svg style="left:594.66px;top:775px" width="16" height="16" viewBox="0 0 16 16"><path d="M2 1 H14 L14.500 11 H1.500Z" fill="#9a9a9a"/><circle cx="8" cy="6" r="2.600" fill="#222"/><circle cx="8" cy="6" r="1.200" fill="#6a8ab0"/><path d="M1 11 H15 L16 14.500 H0Z" fill="#6f6f6f"/><path d="M2 12.500 H14" stroke="#ccc" stroke-width=".6"/></svg>
<svg style="left:616.04px;top:775px" width="16" height="16" viewBox="0 0 16 16"><rect x="1" y="4" width="5" height="4" fill="#e8c97a"/><path d="M3 3 Q9 0 13 3 M13 3 Q16 8 12 13 M12 13 Q6 16 3 12 Q0 9 3 3" fill="none" stroke="#3ba3e6" stroke-width="1.100"/><rect x="9" y="10" width="6" height="4" fill="#f2f2f2"/><rect x="10" y="3" width="5" height="3.500" fill="#eef4fb"/><rect x="2" y="10" width="3.500" height="5" fill="#d8d8d8"/></svg>
<svg style="left:637.42px;top:775px" width="16" height="16" viewBox="0 0 16 16"><rect x=".5" y="1.500" width="6.500" height="6.500" fill="#c9202a"/><rect x="7.500" y="1" width="6.500" height="6.500" fill="#d52832"/><rect x="1" y="8.500" width="6.500" height="6.500" fill="#c9202a"/><g fill="#2a1a1a"><circle cx="3.800" cy="4.300" r="1.700"/><circle cx="10.800" cy="3.800" r="1.700"/><circle cx="4.200" cy="11.300" r="1.700"/></g><g fill="#e8c0a8"><rect x="3" y="5" width="1.600" height="1.600"/><rect x="10" y="4.500" width="1.600" height="1.600"/><rect x="3.400" y="12" width="1.600" height="1.600"/></g><circle cx="11.800" cy="11.800" r="3.400" fill="#3a3a3a" stroke="#222" stroke-width=".6"/><circle cx="11.800" cy="11.800" r="1.400" fill="#5a5f6a"/></svg>
<svg style="left:658.80px;top:775px" width="16" height="16" viewBox="0 0 16 16"><rect x="2" y="1.500" width="12" height="9" fill="#c49a5c"/><rect x=".8" y="3.500" width="13" height="10" fill="#f3f3f3"/><rect x="1.800" y="4.500" width="11" height="5" fill="#6d9bd6"/><rect x="1.800" y="9" width="11" height="3.500" fill="#d9cfc0"/><circle cx="12" cy="12" r="3" fill="#9a9a9a" stroke="#666" stroke-width=".8"/></svg>
<svg style="left:680.18px;top:775px" width="16" height="16" viewBox="0 0 16 16"><rect x="1.500" y=".8" width="13" height="14.400" fill="#b9b9b9" stroke="#dedede" stroke-width=".6" transform="rotate(-4 8 8)"/><text x="8" y="12.500" font-family="Liberation Serif" font-size="11" fill="#333" text-anchor="middle">F</text></svg>
<svg style="left:701.56px;top:775px" width="16" height="16" viewBox="0 0 16 16"><circle cx="8" cy="8" r="7.500" fill="#10a9ee"/><circle cx="3.500" cy="3.500" r="3.300" fill="#10a9ee"/><circle cx="12.500" cy="12.500" r="3.300" fill="#10a9ee"/><text x="8" y="12" font-family="Liberation Sans" font-weight="bold" font-size="11" fill="#fff" text-anchor="middle">S</text></svg>
<svg style="left:722.94px;top:775px" width="16" height="16" viewBox="0 0 16 16"><circle cx="8" cy="8" r="7.800" fill="#1ed65f"/><path d="M3.500 5.700 Q8 4.200 12.500 6.300 M4 8.300 Q8 7.200 11.800 8.800 M4.500 10.800 Q8 9.800 11 11.200" fill="none" stroke="#111" stroke-width="1.300" stroke-linecap="round"/></svg>
<svg style="left:744.32px;top:775px" width="16" height="16" viewBox="0 0 16 16"><circle cx="8" cy="8" r="7.800" fill="#f7f7f7" stroke="#c78be6" stroke-width=".8"/><path d="M6.300 11 V4.500 L11.300 3.500 V10" fill="none" stroke="#f2437a" stroke-width="1.200"/><circle cx="5.200" cy="11.200" r="1.500" fill="#c54bd9"/><circle cx="10.200" cy="10.200" r="1.500" fill="#3e8df2"/></svg>
<svg style="left:765.70px;top:775px" width="16" height="16" viewBox="0 0 16 16"><path d="M.8 2 L4 14 L8 5 L11.500 14 L15.200 2" fill="none" stroke="#26a0e4" stroke-width="2.300" stroke-linejoin="round"/></svg>
<svg style="left:787.08px;top:775px" width="16" height="16" viewBox="0 0 16 16"><path d="M5 15 V3 Q5 1.500 7 1.500 H10 Q14 1.500 14 5 Q14 8.500 10 8.500 H5.500" fill="none" stroke="#e3421d" stroke-width="2.600" stroke-linecap="round"/><path d="M2 3.500 H5" stroke="#e3421d" stroke-width="2.200"/></svg>
<svg style="left:808.46px;top:775px" width="16" height="16" viewBox="0 0 16 16"><circle cx="8" cy="7.700" r="7" fill="#2c3640"/><circle cx="8" cy="7.700" r="4.800" fill="#1e9af0"/><circle cx="8" cy="7.700" r="2.300" fill="#2c3640"/><path d="M9.500 9.500 L14.500 15" stroke="#2c3640" stroke-width="2.300"/></svg>
<svg style="left:829.84px;top:775px" width="16" height="16" viewBox="0 0 16 16"><path d="M6.500 1.500 H9.500 L13.500 13.500 H2.500Z" fill="#f28b0c"/><path d="M5.600 5 H10.400 L11 7 H5Z M4.500 9 H11.500 L12 11 H4Z" fill="#e9e9e9"/><rect x="1" y="13" width="14" height="2.500" rx=".5" fill="#f29a1a"/></svg>
<svg style="left:851.22px;top:775px" width="16" height="16" viewBox="0 0 16 16"><path d="M2 2 L14 .8 L15 14 L3 15.200Z" fill="#f2f2f2"/><path d="M13 1 L10 13" stroke="#8fb1cf" stroke-width=".9"/></svg>
<div class="a" style="left:858px;top:795px;width:3px;height:3px;background:#000"></div>
<svg style="left:872.60px;top:775px" width="16" height="16" viewBox="0 0 16 16"><rect x=".5" y=".5" width="15" height="15" rx="1.500" fill="#2ec34f"/><rect x=".5" y=".5" width="15" height="4" rx="1.500" fill="#5fd46f" opacity=".5"/><path d="M5 3.500 Q6 2.800 8.500 2.800 Q12 3 12.200 5.500 V11.500 Q12.200 13.800 10 13.800 Q8.600 13.800 8.600 12.600 Q8.600 11.400 10 11.400 L10.300 12.300 Q10.800 12.300 10.800 11.500 V9.700 Q9 9.800 8.200 8.800 Q6 9 4.600 8.200 Q3.400 7 3.300 5.200 H5Z M3.200 4.600 L4.600 3.100 V4.600Z" fill="#2a2a2a"/></svg>
<svg style="left:893.98px;top:775px" width="16" height="16" viewBox="0 0 16 16"><rect x=".5" y=".5" width="15" height="15" rx="1" fill="#a9acae"/><circle cx="8" cy="8" r="6" fill="#3b3b3b"/><circle cx="8" cy="8" r="4.300" fill="none" stroke="#9a9a9a" stroke-width="1.200"/><path d="M8 8 V3.700 M8 8 L4.300 10.200 M8 8 L11.700 10.200" stroke="#9a9a9a" stroke-width="1.100"/></svg>
<svg style="left:915.36px;top:775px" width="16" height="16" viewBox="0 0 16 16"><rect x=".5" y=".5" width="15" height="15" fill="#e2051d"/><path d="M3 13 Q4 4.500 8 4 Q10.500 4 9 8 Q8.500 10.500 10.500 10.500 Q12 10.500 13 9.500" fill="none" stroke="#fff" stroke-width="1.400" stroke-linecap="round"/></svg>
<svg style="left:936.74px;top:775px" width="16" height="16" viewBox="0 0 16 16"><path d="M1 5 L4 2.500 H10 L13.500 5.500 V15.500 H1Z" fill="#c9c9c9"/><path d="M1 12 H13.500 V15.500 H1Z" fill="#9a9a9a"/><circle cx="7" cy="8.500" r="3.300" fill="#e6e6e6" stroke="#777" stroke-width=".7"/><path d="M5.500 8 Q7 10 8.500 8" fill="none" stroke="#555" stroke-width=".8"/><path d="M9 3 Q12 -.5 14.500 2 Q16 5 14.500 9 Q13.500 11 12 11" fill="none" stroke="#3a3a3a" stroke-width=".9"/></svg>
<svg style="left:958.12px;top:775px" width="16" height="16" viewBox="0 0 16 16"><path d="M1.500 3 L14 1.500 L15 14 L2.500 15.200Z" fill="#b5b5b5"/><path d="M11 2 L14 1.500 L15 14 L12 14.300Z" fill="#f0852a"/><path d="M1.500 3 L14 1.500 L14.200 3.500 L1.700 5Z" fill="#3a4f5a"/></svg>
<div class="a" style="left:982px;top:776px;width:1px;height:20px;background:#222"></div>
<svg style="left:989.60px;top:776px" width="16" height="14"><use href="#sfold"/></svg>
<svg style="left:1010.95px;top:776px" width="16" height="14"><use href="#sfold"/></svg>
<svg style="left:1032.30px;top:776px" width="16" height="14"><use href="#sfold"/></svg>
<svg style="left:1053.65px;top:776px" width="16" height="14"><use href="#sfold"/></svg>
<svg style="left:1075.00px;top:775px" width="16" height="16" viewBox="0 0 16 16"><rect x="0" y="3" width="16" height="10" fill="#f4f4f4"/><rect x=".5" y="3.500" width="15" height="9" fill="none" stroke="#ccc" stroke-width=".5"/><circle cx="13" cy="13" r="2.300" fill="#e53b30"/><circle cx="13" cy="13" r="1" fill="#4b8bf5"/></svg>
<svg style="left:1096.35px;top:775px" width="16" height="16" viewBox="0 0 16 16"><rect x="0" y="4" width="16" height="9" fill="#f7f7f7"/><rect x="13" y="5" width="2" height="3" fill="#3aa0a0"/><rect x="12" y="11" width="3" height="4" fill="#1c7fe0"/></svg>
<svg style="left:1117.70px;top:775px" width="16" height="16" viewBox="0 0 16 16"><rect x="0" y="4" width="16" height="9" fill="#f7f7f7"/><rect x="12" y="11" width="3" height="4" fill="#1c7fe0"/><path d="M2 7 H10 M2 9 H12" stroke="#ccc" stroke-width=".5"/></svg>
<svg style="left:1139.05px;top:775px" width="16" height="16" viewBox="0 0 16 16"><rect x="0" y="2" width="16" height="13" fill="#e3e3e3"/><rect x="1" y="5" width="14" height="3" fill="#c9c9c9"/><path d="M12 15 L15 11" stroke="#fff" stroke-width="1.500"/></svg>
<svg style="left:1160.40px;top:775px" width="16" height="16" viewBox="0 0 16 16"><rect x="0" y="3" width="16" height="12" fill="#151b2a"/><rect x=".8" y="4.500" width="14.400" height="9" fill="#fafafa"/><circle cx="14" cy="13.500" r="2" fill="#333"/></svg>
<svg style="left:1181.75px;top:775px" width="16" height="16" viewBox="0 0 16 16"><rect x="0" y="4" width="16" height="9" fill="#f7f7f7"/><rect x="13" y="5" width="2" height="2" fill="#3a8aa0"/><rect x="12" y="11" width="3" height="4" fill="#1c7fe0"/></svg>
<svg style="left:1203.10px;top:775px" width="16" height="16" viewBox="0 0 16 16"><rect x="0" y="2" width="16" height="13" fill="#f2f2f2"/><path d="M2 5 H14 M2 7 H14 M2 9 H14" stroke="#c8c8d8" stroke-width=".6"/></svg>
<svg style="left:1224.45px;top:775px" width="16" height="16" viewBox="0 0 16 16"><rect x=".5" y="1" width="14" height="15" fill="#fdfdfd"/><rect x=".5" y="1" width="14" height="1.800" fill="#1a8f90"/><path d="M2 5 H7 M2 7 H12 M2 8.500 H10 M2 10 H11" stroke="#f0b72a" stroke-width="1"/><rect x=".5" y="13.500" width="14" height="2.500" fill="#111"/><circle cx="13.500" cy="13.800" r="2.300" fill="#1aa0a0"/></svg>
<svg style="left:1246.00px;top:775px" width="16" height="16" viewBox="0 0 16 16"><path d="M2.500 2.500 H13.500 L12 15 H4Z" fill="#d7d7d7" opacity=".9"/><ellipse cx="8" cy="2.500" rx="5.600" ry="1.500" fill="#bdbdbd"/><path d="M5 5 L5.800 14 M8 5 V14 M11 5 L10.200 14" stroke="#efefef" stroke-width=".6"/><circle cx="6" cy="2" r=".8" fill="#3a8"/><circle cx="9" cy="2" r=".8" fill="#a33"/></svg>
</body></html>
